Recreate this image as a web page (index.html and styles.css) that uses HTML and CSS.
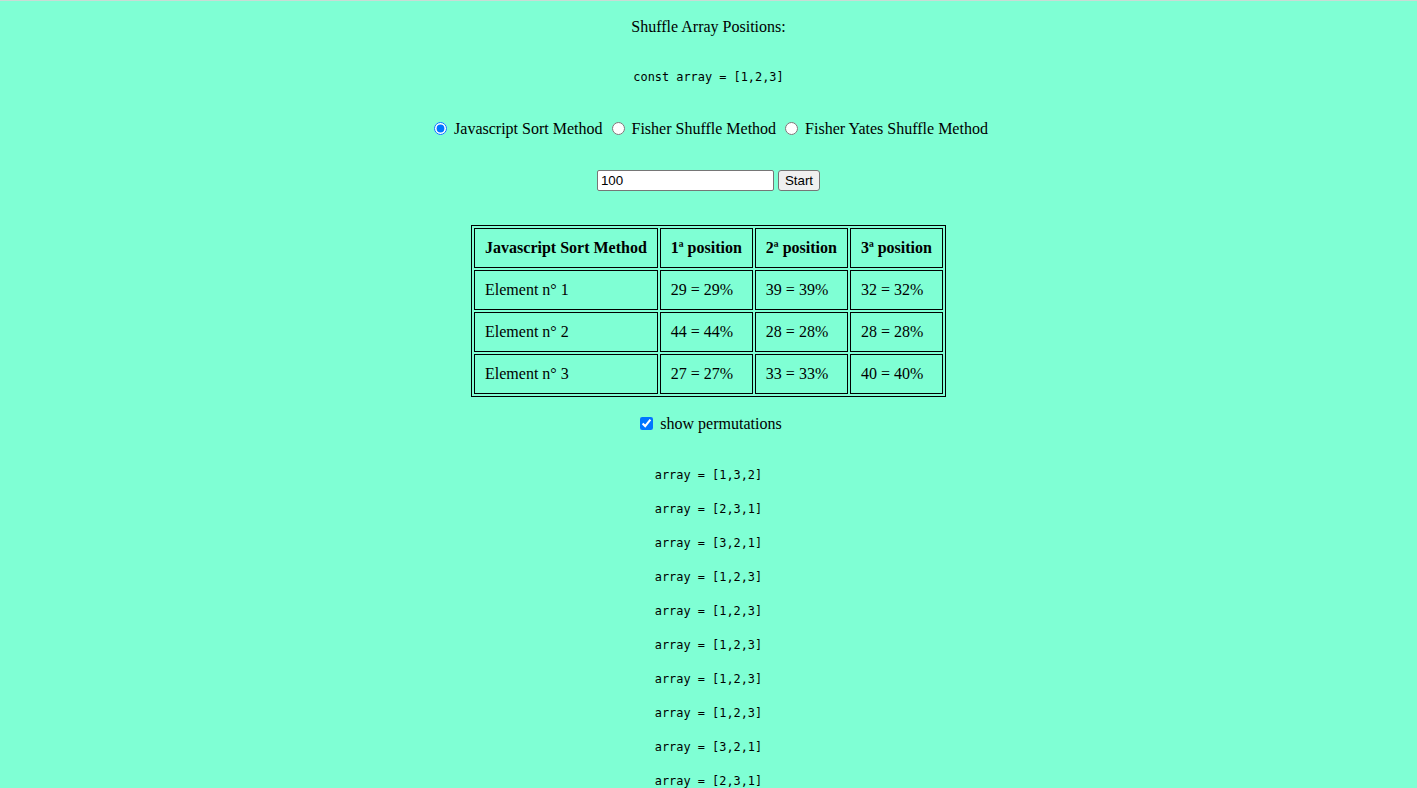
FILE: index.html
```html
<!DOCTYPE html>
<html>
<head>
<meta charset="utf-8">
<title>Shuffle Array Positions</title>
<link rel="stylesheet" href="styles.css">
</head>
<body>
<div class="page">
  <p class="title">Shuffle Array Positions:</p>
  <p class="line"><code>const array = [1,2,3]</code></p>
  <div class="methods">
    <label><input type="radio" name="method" checked> Javascript Sort Method</label>
    <label><input type="radio" name="method"> Fisher Shuffle Method</label>
    <label><input type="radio" name="method"> Fisher Yates Shuffle Method</label>
  </div>
  <div class="controls">
    <input class="count" type="text" value="100">
    <button class="start" type="button">Start</button>
  </div>
  <table class="results">
    <tr><th>Javascript Sort Method</th><th>1ª position</th><th>2ª position</th><th>3ª position</th></tr>
    <tr><td>Element n° 1</td><td>29 = 29%</td><td>39 = 39%</td><td>32 = 32%</td></tr>
    <tr><td>Element n° 2</td><td>44 = 44%</td><td>28 = 28%</td><td>28 = 28%</td></tr>
    <tr><td>Element n° 3</td><td>27 = 27%</td><td>33 = 33%</td><td>40 = 40%</td></tr>
  </table>
  <label class="toggle"><input type="checkbox" checked> show permutations</label>
  <div class="perms">
    <p class="line"><code>array = [1,3,2]</code></p>
    <p class="line"><code>array = [2,3,1]</code></p>
    <p class="line"><code>array = [3,2,1]</code></p>
    <p class="line"><code>array = [1,2,3]</code></p>
    <p class="line"><code>array = [1,2,3]</code></p>
    <p class="line"><code>array = [1,2,3]</code></p>
    <p class="line"><code>array = [1,2,3]</code></p>
    <p class="line"><code>array = [1,2,3]</code></p>
    <p class="line"><code>array = [3,2,1]</code></p>
    <p class="line"><code>array = [2,3,1]</code></p>
    <p class="line"><code>array = [1,3,2]</code></p>
    <p class="line"><code>array = [2,1,3]</code></p>
    <p class="line"><code>array = [1,2,3]</code></p>
  </div>
</div>
</body>
</html>
```

FILE: styles.css
```css
html {
  background: #7fffd4;
}
body {
  margin: 0;
  border-top: 1px solid #c9dcd5;
  font-family: "Liberation Serif", "Times New Roman", serif;
  font-size: 16px;
  color: #000;
}
.page {
  display: flex;
  flex-direction: column;
  align-items: center;
  padding-top: 17px;
}
p {
  margin: 0;
}
.title {
  height: 18px;
  line-height: 18px;
  margin-bottom: 32px;
}
.line {
  height: 18px;
}
.line code {
  display: block;
  padding-top: 1px;
  line-height: 17px;
  font-family: "DejaVu Sans Mono", "Liberation Mono", monospace;
  font-size: 11.9px;
}
.page > .line {
  margin-bottom: 33px;
}
.methods {
  height: 18px;
  line-height: 18px;
  margin-bottom: 33px;
  white-space: nowrap;
}
.methods input {
  margin: 3px 3px 0 5px;
  vertical-align: -1px;
}
.controls {
  display: flex;
  align-items: center;
  gap: 4px;
  height: 21px;
  margin-bottom: 34px;
}
.count {
  box-sizing: border-box;
  width: 177px;
  height: 21px;
  margin: 0;
  padding: 1px 3px;
  border: 1px solid #767676;
  border-radius: 2px;
  background: #fff;
  font-family: "Liberation Sans", Arial, sans-serif;
  font-size: 13.33px;
  color: #000;
}
.start {
  box-sizing: border-box;
  height: 21px;
  margin: 0;
  padding: 1px 6px;
  border: 1px solid #767676;
  border-radius: 3px;
  background: #efefef;
  font-family: "Liberation Sans", Arial, sans-serif;
  font-size: 13.33px;
  color: #000;
}
.results {
  border: 1px solid #000;
  border-spacing: 2px;
  margin-bottom: 17px;
}
.results th,
.results td {
  border: 1px solid #000;
  padding: 10px 10px;
  line-height: 18px;
  text-align: left;
  white-space: nowrap;
}
.results th {
  font-weight: bold;
}
.toggle {
  height: 18px;
  line-height: 18px;
  margin-bottom: 34px;
}
.toggle input {
  margin: 3px 3px 0 5px;
  vertical-align: -1px;
}
.perms {
  display: flex;
  flex-direction: column;
  align-items: center;
  gap: 16px;
}
```
